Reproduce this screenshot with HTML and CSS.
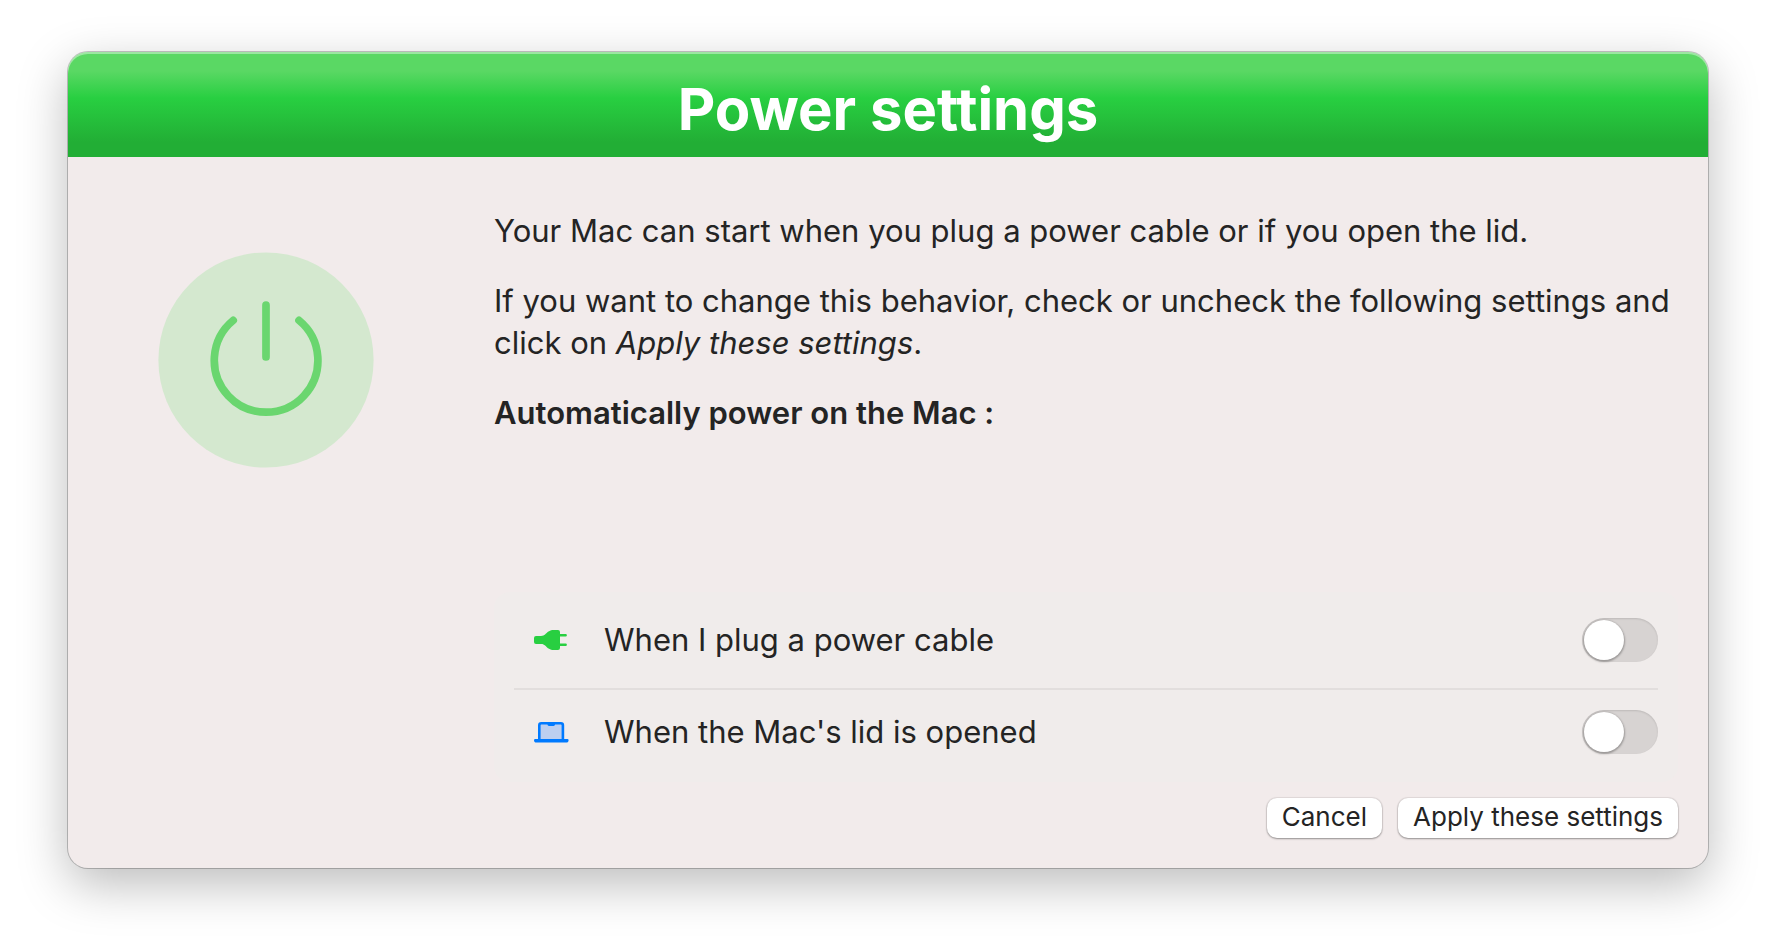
FILE: index.html
```html
<!DOCTYPE html>
<html lang="en">
<head>
<meta charset="utf-8">
<title>Power settings</title>
<meta name="viewport" content="width=device-width, initial-scale=1">
<link rel="stylesheet" href="styles.css">
</head>
<body>
<main class="window">
  <header class="banner"><h1 class="title">Power settings</h1></header>
  <form class="content">
    <svg class="power" viewBox="0 0 216 216" aria-hidden="true">
      <circle class="power-disc" cx="108" cy="108" r="107.6"/>
      <path class="power-mark" d="M75.2 68.4A51.8 51.8 0 1 0 141 68.4M108 53v52"/>
    </svg>
    <div class="details">
      <p class="text">Your Mac can start when you plug a power cable or if you open the lid.</p>
      <p class="text">If you want to change this behavior, check or uncheck the following settings and click on <em>Apply these settings</em>.</p>
      <h2 class="text subtitle">Automatically power on the Mac :</h2>
      <div class="options">
        <div class="option">
          <svg class="icon" viewBox="0 0 36 24" aria-hidden="true">
            <path fill="#28cf41" d="M0 10a2 2 0 0 1 2-2h5c4 0 4.500-2.500 7-4.200C16.200 2.400 18 2 20 2h4a2 2 0 0 1 2 2v2h5.600a1.300 1.300 0 0 1 0 2.600H26v6.800h5.600a1.300 1.300 0 0 1 0 2.600H26v2a2 2 0 0 1-2 2h-4c-2 0-3.800-.4-6-1.800C11.500 18.500 11 16 7 16H2a2 2 0 0 1-2-2z"/>
          </svg>
          <label class="label" for="cable">When I plug a power cable</label>
          <input class="switch" type="checkbox" role="switch" id="cable">
        </div>
        <div class="option">
          <svg class="icon" viewBox="0 0 36 24" aria-hidden="true">
            <path fill="#bccff0" stroke="#007aff" stroke-width="2.600" d="M5.300 20V5.300a2 2 0 0 1 2-2h19.600a2 2 0 0 1 2 2V20"/>
            <path fill="#007aff" d="M13.500 3h7.500v1.600a1.400 1.400 0 0 1-1.400 1.400h-4.700a1.400 1.400 0 0 1-1.400-1.400zM1.200 19h32.200a1.200 1.200 0 0 1 1.200 1.200c0 1.400-1 2.300-2.300 2.300H2.300C1 22.500 0 21.600 0 20.200A1.200 1.200 0 0 1 1.200 19z"/>
          </svg>
          <label class="label" for="lid">When the Mac's lid is opened</label>
          <input class="switch" type="checkbox" role="switch" id="lid">
        </div>
      </div>
      <div class="actions">
        <button class="button" type="button">Cancel</button>
        <button class="button" type="button">Apply these settings</button>
      </div>
    </div>
  </form>
</main>
</body>
</html>
```
FILE: styles.css
```css
* { box-sizing: border-box; }

body {
  display: flex;
  min-height: 100vh;
  margin: 0;
  padding: 52px 68px 84px;
  background: #fff;
  color: #242424;
  font-family: Inter, "Liberation Sans", sans-serif;
}

.window {
  flex: 1;
  display: flex;
  flex-direction: column;
  border-radius: 20px;
  background: #f2ebeb;
  box-shadow: 0 0 0 1px rgba(0, 0, 0, .22), 0 16px 50px rgba(0, 0, 0, .27);
}

.banner {
  padding: 25px 20px 15px;
  border-radius: 20px 20px 0 0;
  background: linear-gradient(#5ad864 18%, #28cf41 44%, #22ae35 86%);
  box-shadow: inset 0 2px 0 rgba(255, 255, 255, .4);
}

.title {
  margin: 0;
  color: #fff;
  font-size: 58px;
  font-weight: 700;
  line-height: 65px;
  text-align: center;
}

.content {
  flex: 1;
  display: flex;
  gap: 120px;
  padding: 53px 30px 30px 90px;
}

.power {
  flex: none;
  width: 216px;
  height: 216px;
  margin-top: 42px;
}

.power-disc { fill: #d4e8cf; }

.power-mark {
  fill: none;
  stroke: #6ad66f;
  stroke-width: 7.7;
  stroke-linecap: round;
}

.details {
  flex: 1;
  display: flex;
  flex-direction: column;
}

.text {
  margin: 0 0 28px;
  font-size: 31px;
  line-height: 42px;
}

.subtitle { font-weight: 600; }

.options {
  margin-top: auto;
  padding: 6px 20px 2px;
  border-radius: 16px;
  background: #f0eceb;
}

.option {
  display: flex;
  align-items: center;
  padding: 20px 0 26px 20px;
}

.option + .option { border-top: 2px solid #e2dedd; }

.icon {
  width: 36px;
  height: 24px;
}

.label {
  flex: 1;
  padding-left: 34px;
  font-size: 31px;
  line-height: 42px;
}

.switch {
  appearance: none;
  width: 76px;
  height: 44px;
  margin: 0;
  padding: 2px;
  border-radius: 22px;
  background: #d7d3d2;
  box-shadow: inset 0 1px 2px rgba(0, 0, 0, .12);
}

.switch::before {
  content: "";
  display: block;
  width: 40px;
  height: 40px;
  border-radius: 50%;
  background: #fff;
  box-shadow: 0 1px 2px 1px rgba(0, 0, 0, .28);
}

.switch:checked { background: #28cf41; }
.switch:checked::before { margin-left: auto; }

.actions {
  display: flex;
  justify-content: flex-end;
  gap: 16px;
  margin-top: 16px;
}

.button {
  height: 40px;
  padding: 0 15px 2px;
  border: 0;
  border-radius: 10px;
  background: #fff;
  box-shadow: 0 0 1px 1px rgba(0, 0, 0, .07), 0 1px 2px rgba(0, 0, 0, .35);
  color: #242424;
  font: 26px/32px Inter, "Liberation Sans", sans-serif;
}
```
